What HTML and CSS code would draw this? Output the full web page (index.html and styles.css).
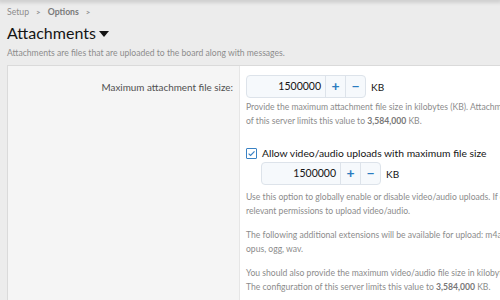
FILE: index.html
```html
<!DOCTYPE html>
<html>
<head>
<meta charset="utf-8">
<link rel="stylesheet" href="styles.css">
</head>
<body>
<div class="topbar"></div>
<div class="page">
  <nav class="crumbs"><span>Setup</span><span class="sep">&gt;</span><b>Options</b><span class="sep">&gt;</span></nav>
  <h1 class="title">Attachments <span class="caret"></span></h1>
  <p class="desc">Attachments are files that are uploaded to the board along with messages.</p>
  <div class="block">
    <div class="row">
      <div class="label">Maximum attachment file size:</div>
      <div class="controls">
        <div class="numline">
          <div class="num"><span class="val">1500000</span><span class="btn">+</span><span class="btn">&minus;</span></div>
          <span class="unit">KB</span>
        </div>
        <p class="explain first">Provide the maximum attachment file size in kilobytes (KB). Attachments larger than this will be rejected. The configuration<br>of this server limits this value to <b>3,584,000</b> KB.</p>

        <label class="check"><span class="box"><svg width="9" height="9" viewBox="0 0 9 9"><path d="M1.6 4.6 L3.6 6.5 L7.5 2.4" fill="none" stroke="#3a82c4" stroke-width="1.2"/></svg></span>Allow video/audio uploads with maximum file size</label>
        <div class="numline sub">
          <div class="num"><span class="val">1500000</span><span class="btn">+</span><span class="btn">&minus;</span></div>
          <span class="unit">KB</span>
        </div>
        <p class="explain sub2">Use this option to globally enable or disable video/audio uploads. If enabled, users will still need to have the<br>relevant permissions to upload video/audio.</p>
        <p class="explain sub2">The following additional extensions will be available for upload: m4a, mov, mp3, mp4, ogv, webm, ...<br>opus, ogg, wav.</p>
        <p class="explain sub2">You should also provide the maximum video/audio file size in kilobytes (KB).<br>The configuration of this server limits this value to <b>3,584,000</b> KB.</p>
      </div>
    </div>
  </div>
</div>
</body>
</html>
```

FILE: styles.css
```css
html, body {
  margin: 0;
  padding: 0;
  background: #ececec;
  overflow: hidden;
  width: 500px;
  height: 300px;
}
body {
  font-family: Lato, "Open Sans", sans-serif;
  color: #141414;
}
.topbar {
  height: 0;
  box-shadow: 0 0 4px 2px rgba(0,0,0,0.18);
}
.page {
  padding: 5px 0 0 7px;
  width: 900px;
}
.crumbs {
  font-size: 8.7px;
  color: #8c8c8c;
  height: 14px;
  line-height: 14px;
  display: flex;
  align-items: center;
}
.crumbs b {
  font-weight: 700;
  color: #7a7a7a;
}
.crumbs .sep {
  margin: 0 7px;
  font-size: 8px;
  font-weight: 700;
}
.title {
  margin: 3px 0 0;
  font-size: 16px;
  font-weight: 400;
  line-height: 22px;
  height: 22px;
  display: flex;
  align-items: center;
  gap: 3px;
}
.caret {
  width: 0;
  height: 0;
  border-left: 5px solid transparent;
  border-right: 5px solid transparent;
  border-top: 6px solid #141414;
  margin-top: 1px;
}
.desc {
  margin: 2px 0 0;
  font-size: 8.6px;
  line-height: 14px;
  color: #8c8c8c;
}
.block {
  margin-top: 5px;
  border: 1px solid #dadada;
  border-right: none;
  background: #fff;
}
.row {
  display: grid;
  grid-template-columns: 232px 1fr;
}
.label {
  background: #f5f5f5;
  border-right: 1px solid #e6e6e6;
  text-align: right;
  padding: 13px 6px 0 0;
  font-size: 9.9px;
  color: #505050;
  line-height: 16px;
  height: 300px;
}
.controls {
  padding: 9px 0 0 6px;
  white-space: nowrap;
}
.numline {
  display: flex;
  align-items: center;
  gap: 5px;
}
.num {
  display: flex;
  width: 118px;
  height: 21px;
  border: 1px solid #dde3ea;
  border-radius: 4px;
  background: #f6f9fc;
  overflow: hidden;
}
.val {
  flex: 1;
  text-align: right;
  padding-right: 4px;
  font-size: 10.5px;
  line-height: 21px;
  color: #141414;
}
.btn {
  width: 19px;
  border-left: 1px solid #dde3ea;
  text-align: center;
  color: #2a7cc0;
  font-size: 14px;
  line-height: 20px;
  font-weight: 700;
}
.unit {
  font-size: 10px;
  color: #141414;
}
.explain {
  margin: 5px 0 0;
  font-size: 8.6px;
  line-height: 14px;
  color: #8c8c8c;
}
.explain.first {
  margin-top: 2px;
}
.explain b {
  color: #777;
  font-weight: 700;
}
.check {
  display: flex;
  align-items: center;
  margin-top: 17px;
  font-size: 10.3px;
  color: #141414;
  line-height: 16px;
}
.box {
  display: inline-flex;
  align-items: center;
  justify-content: center;
  width: 9px;
  height: 9px;
  border: 1px solid #3a82c4;
  border-radius: 1px;
  margin-right: 5px;
  background: #fff;
}
.sub {
  margin-left: 15px;
  margin-top: 1px;
}
.sub2 {
  margin-top: 5px;
}
.sub2 + .sub2 {
  margin-top: 10px;
}
```
